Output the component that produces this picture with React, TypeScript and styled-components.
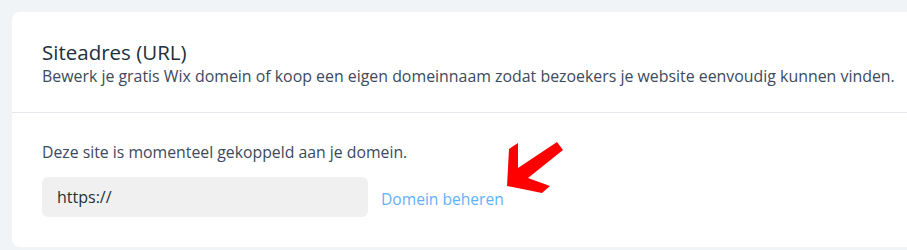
import React from 'react';
import styled, {createGlobalStyle} from 'styled-components';

const Global = createGlobalStyle`
  html, body {
    margin: 0;
    padding: 0;
    background: #f0f4f7;
    overflow: hidden;
  }
  body {
    font-family: "Open Sans", "Noto Sans", sans-serif;
  }
`;

const Page = styled.div`
  padding: 12px 0 0 12px;
  width: 907px;
  height: 250px;
  box-sizing: border-box;
`;

const Card = styled.div`
  position: relative;
  width: 920px;
  height: 235px;
  background: #fff;
  border-radius: 8px;
  box-sizing: border-box;
`;

const Header = styled.div`
  padding: 27px 30px 0 30px;
  height: 101px;
  box-sizing: border-box;
  border-bottom: 1px solid #e3e6ea;
`;

const Title = styled.h2`
  margin: 0;
  font-size: 20.5px;
  font-weight: 400;
  line-height: 26px;
  color: #20303c;
`;

const Subtitle = styled.p`
  margin: 0;
  font-size: 15.9px;
  line-height: 22px;
  color: #3b4a5c;
`;

const Body = styled.div`
  padding: 28px 30px 0 30px;
`;

const Info = styled.p`
  margin: 0;
  font-size: 15.8px;
  line-height: 22px;
  color: #3b4a5c;
`;

const Row = styled.div`
  display: flex;
  align-items: center;
  gap: 13px;
  margin-top: 14px;
`;

const UrlField = styled.div`
  width: 326px;
  height: 40px;
  box-sizing: border-box;
  padding: 0 15px;
  display: flex;
  align-items: center;
  background: #f0f0f0;
  border-radius: 6px;
  font-size: 16px;
  color: #20303c;
`;

const Link = styled.span`
  font-size: 15.6px;
  color: #5fb1fb;
  margin-top: 4px;
  cursor: pointer;
`;

const Arrow = styled.svg`
  position: absolute;
  left: 482px;
  top: 120px;
`;

export default function App() {
  return (
    <Page>
      <Global />
      <Card>
        <Header>
          <Title>Siteadres (URL)</Title>
          <Subtitle>Bewerk je gratis Wix domein of koop een eigen domeinnaam zodat bezoekers je website eenvoudig kunnen vinden.</Subtitle>
        </Header>
        <Body>
          <Info>Deze site is momenteel gekoppeld aan je domein.</Info>
          <Row>
            <UrlField>https://</UrlField>
            <Link>Domein beheren</Link>
          </Row>
        </Body>
        <Arrow width="80" height="70" viewBox="494 132 80 70">
          <polygon
            points="507,186 509,149 518,143 518,168 557,142 563,150 528,178 550,186 542,193"
            fill="#ff0000"
          />
        </Arrow>
      </Card>
    </Page>
  );
}
